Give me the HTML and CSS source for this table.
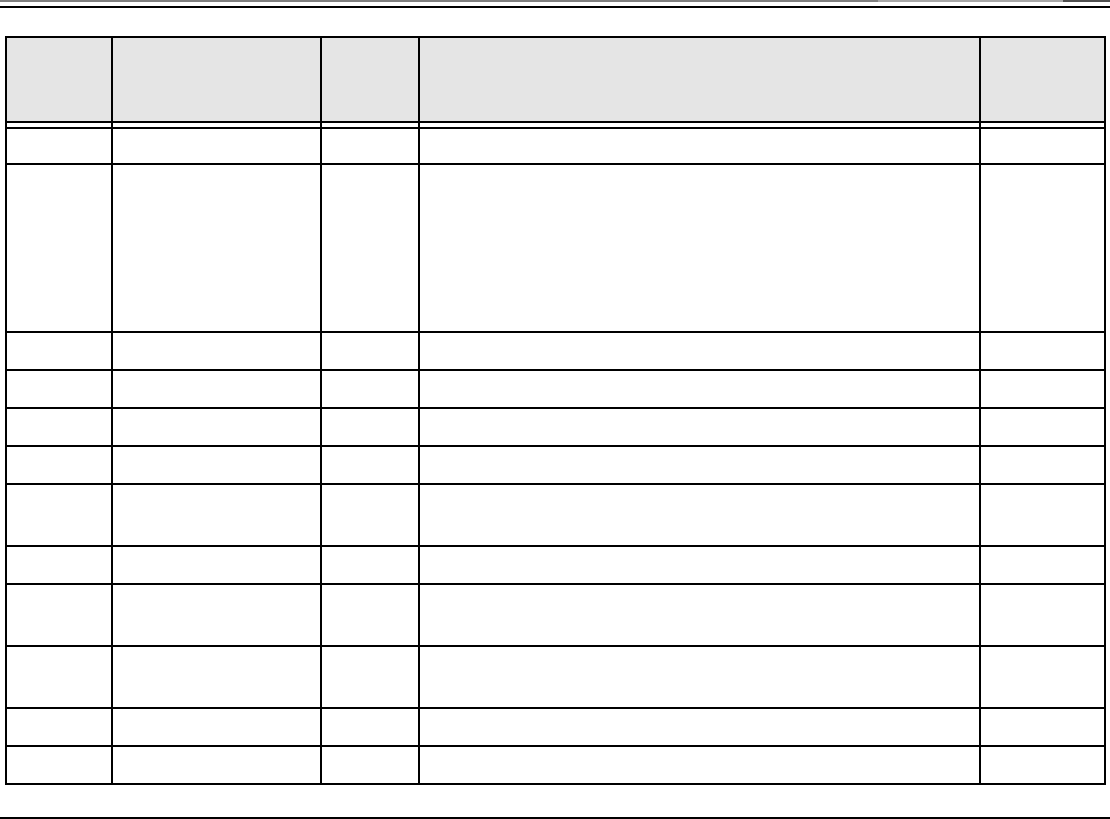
FILE: index.html
```html
<!DOCTYPE html>
<html lang="en">
<head>
<meta charset="utf-8">
<title>Table</title>
<link rel="stylesheet" href="styles.css">
</head>
<body>
<div class="page">
  <div class="topbar">
    <span class="seg seg-a"></span>
    <span class="seg seg-b"></span>
    <span class="seg seg-c"></span>
  </div>
  <div class="rule rule-top"></div>
  <table class="grid">
    <colgroup>
      <col class="c1"><col class="c2"><col class="c3"><col class="c4"><col class="c5">
    </colgroup>
    <thead>
      <tr class="head"><th></th><th></th><th></th><th></th><th></th></tr>
      <tr class="spacer"><td></td><td></td><td></td><td></td><td></td></tr>
    </thead>
    <tbody>
      <tr class="h34"><td></td><td></td><td></td><td></td><td></td></tr>
      <tr class="h166"><td></td><td></td><td></td><td></td><td></td></tr>
      <tr class="h36"><td></td><td></td><td></td><td></td><td></td></tr>
      <tr class="h36"><td></td><td></td><td></td><td></td><td></td></tr>
      <tr class="h36"><td></td><td></td><td></td><td></td><td></td></tr>
      <tr class="h36"><td></td><td></td><td></td><td></td><td></td></tr>
      <tr class="h60"><td></td><td></td><td></td><td></td><td></td></tr>
      <tr class="h36"><td></td><td></td><td></td><td></td><td></td></tr>
      <tr class="h60"><td></td><td></td><td></td><td></td><td></td></tr>
      <tr class="h60"><td></td><td></td><td></td><td></td><td></td></tr>
      <tr class="h36"><td></td><td></td><td></td><td></td><td></td></tr>
      <tr class="h36"><td></td><td></td><td></td><td></td><td></td></tr>
    </tbody>
  </table>
  <div class="rule rule-bottom"></div>
</div>
</body>
</html>
```
FILE: styles.css
```css
html, body {
  margin: 0;
  padding: 0;
  background: #ffffff;
  font-family: "Liberation Sans", Arial, sans-serif;
}

.page {
  width: 1110px;
  height: 819px;
  overflow: hidden;
}

.topbar {
  display: flex;
  height: 2px;
}

.seg { display: block; height: 2px; }
.seg-a { width: 878px; background: #808080; }
.seg-b { width: 185px; background: #a8a8a8; }
.seg-c { flex: 1; background: #505050; }

.rule {
  height: 2px;
  background: #000000;
}

.rule-top { margin-top: 4px; }
.rule-bottom { margin-top: 32px; }

.grid {
  margin: 28px 0 0 5px;
  width: 1101px;
  table-layout: fixed;
  border-collapse: separate;
  border-spacing: 2px;
  background: #000000;
}

.c1 { width: 104px; }
.c2 { width: 207px; }
.c3 { width: 96px; }
.c4 { width: 559px; }
.c5 { width: 123px; }

.grid th,
.grid td {
  padding: 0;
  background: #ffffff;
}

.head th { height: 83px; background: #e5e5e5; }
.spacer td { height: 4px; }
.h34 td { height: 34px; }
.h36 td { height: 36px; }
.h60 td { height: 60px; }
.h166 td { height: 166px; }
```
